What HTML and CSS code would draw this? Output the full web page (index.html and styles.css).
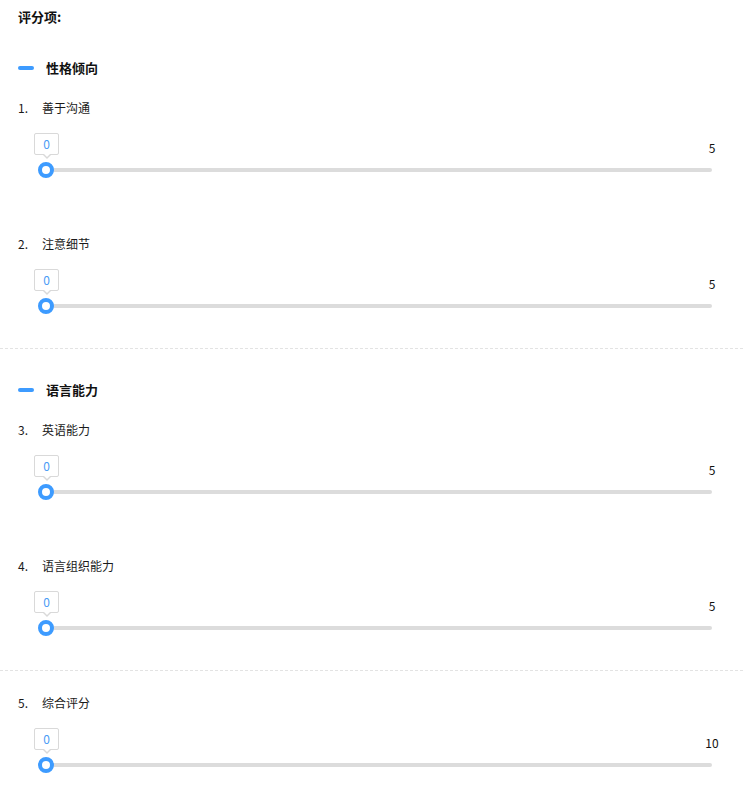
FILE: index.html
```html
<!DOCTYPE html>
<html lang="zh-CN">
<head>
<meta charset="utf-8">
<title>评分项</title>
<link rel="stylesheet" href="styles.css">
</head>
<body>
<div class="page">
  <div class="title">评分项:</div>

  <div class="group group-first">
    <div class="group-head"><span class="bar"></span><span>性格倾向</span></div>
    <div class="item">
      <div class="item-label"><span class="num">1.</span><span>善于沟通</span></div>
      <div class="slider">
        <div class="slider-top"><span class="tip">0</span><span class="max"><span>5</span></span></div>
        <div class="track-row"><div class="track"></div><span class="thumb"></span></div>
      </div>
    </div>
    <div class="item">
      <div class="item-label"><span class="num">2.</span><span>注意细节</span></div>
      <div class="slider">
        <div class="slider-top"><span class="tip">0</span><span class="max"><span>5</span></span></div>
        <div class="track-row"><div class="track"></div><span class="thumb"></span></div>
      </div>
    </div>
  </div>

  <div class="group">
    <div class="group-head"><span class="bar"></span><span>语言能力</span></div>
    <div class="item">
      <div class="item-label"><span class="num">3.</span><span>英语能力</span></div>
      <div class="slider">
        <div class="slider-top"><span class="tip">0</span><span class="max"><span>5</span></span></div>
        <div class="track-row"><div class="track"></div><span class="thumb"></span></div>
      </div>
    </div>
    <div class="item">
      <div class="item-label"><span class="num">4.</span><span>语言组织能力</span></div>
      <div class="slider">
        <div class="slider-top"><span class="tip">0</span><span class="max"><span>5</span></span></div>
        <div class="track-row"><div class="track"></div><span class="thumb"></span></div>
      </div>
    </div>
  </div>

  <div class="group group-plain">
    <div class="item">
      <div class="item-label"><span class="num">5.</span><span>综合评分</span></div>
      <div class="slider">
        <div class="slider-top"><span class="tip">0</span><span class="max"><span>10</span></span></div>
        <div class="track-row"><div class="track"></div><span class="thumb"></span></div>
      </div>
    </div>
  </div>
</div>
</body>
</html>
```

FILE: styles.css
```css
html, body {
  margin: 0;
  padding: 0;
  background: #fff;
}
body {
  font-family: "Noto Sans CJK SC", "Noto Sans", "Liberation Sans", sans-serif;
  color: #1a1a1a;
  font-size: 12px;
}
.page {
  padding: 7px 18px 0;
}
.title {
  font-size: 13px;
  font-weight: bold;
  line-height: 20px;
  color: #111;
}
.group {
  margin: 0 -18px;
  padding: 31px 18px 34px;
  border-bottom: 1px dashed #e3e3e3;
}
.group-first {
  padding-top: 31px;
}
.group-plain {
  padding-top: 22px;
  border-bottom: none;
  padding-bottom: 0;
}
.group-head {
  display: flex;
  align-items: center;
  line-height: 20px;
  font-size: 13px;
  font-weight: bold;
  color: #111;
  margin-bottom: 20px;
}
.bar {
  width: 16px;
  height: 4px;
  border-radius: 2px;
  background: #3d9bff;
  margin-right: 12px;
}
.item {
  margin-bottom: 56px;
}
.item:last-child {
  margin-bottom: 0;
}
.item-label {
  display: flex;
  line-height: 20px;
  font-size: 12px;
}
.num {
  width: 24px;
}
.slider {
  margin: 15px 13px 0 21px;
}
.slider-top {
  display: flex;
  justify-content: space-between;
  height: 26px;
}
.tip {
  position: relative;
  margin-left: -5px;
  width: 23px;
  height: 20px;
  border: 1px solid #d9d9d9;
  border-radius: 2px;
  color: #4a9cf5;
  font-size: 12px;
  line-height: 20px;
  text-align: center;
  background: #fff;
}
.tip::before {
  content: "";
  position: absolute;
  left: 8px;
  bottom: -5px;
  border-left: 4px solid transparent;
  border-right: 4px solid transparent;
  border-top: 4px solid #d9d9d9;
}
.tip::after {
  content: "";
  position: absolute;
  left: 9px;
  bottom: -3px;
  border-left: 3px solid transparent;
  border-right: 3px solid transparent;
  border-top: 3px solid #fff;
}
.max {
  width: 0;
  display: flex;
  justify-content: center;
  padding-top: 7px;
  line-height: 16px;
  font-size: 12px;
  color: #111;
}
.max span {
  white-space: nowrap;
}
.track-row {
  position: relative;
  margin-top: 3px;
  height: 16px;
  display: flex;
  align-items: center;
}
.track {
  flex: 1;
  height: 4px;
  border-radius: 2px;
  background: #dcdcdc;
}
.thumb {
  position: absolute;
  left: -1px;
  top: 0;
  width: 8px;
  height: 8px;
  border: 4px solid #3d9bff;
  border-radius: 50%;
  background: #fff;
}
```
